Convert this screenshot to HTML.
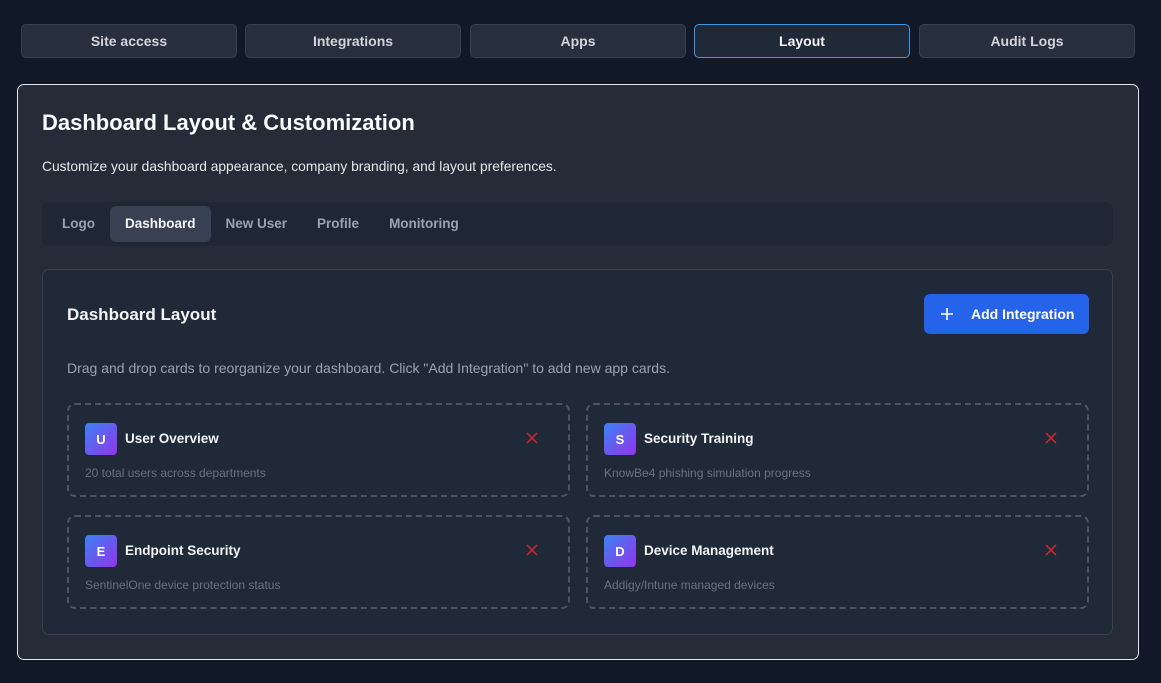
<!DOCTYPE html>
<html><head><meta charset="utf-8"><style>
*{box-sizing:border-box;margin:0;padding:0}
body{width:1161px;height:683px;background:#111827;font-family:"Liberation Sans",sans-serif;position:relative;overflow:hidden;color:#f3f4f6}
.t{position:absolute;top:24px;height:34px;width:216px;background:#282f3c;border:1px solid #374151;border-radius:5px;color:#d1d5db;font-size:14px;font-weight:bold;display:flex;align-items:center;justify-content:center}
.t.a{background:#1f2937;border-color:#3b9ae8;color:#f3f4f6}
.panel{position:absolute;left:17px;top:84px;width:1122px;height:576px;background:#252b37;border:1px solid #e5e7eb;border-radius:7px}
.abs{position:absolute}
.sub{display:flex;position:absolute;left:24px;top:117px;width:1071px;height:44px;background:#1f2735;border-radius:7px;align-items:center;padding-left:5px}
.sub div{font-size:13.5px;font-weight:bold;color:#9ca3af;padding:0 15px;height:36px;line-height:36px;border-radius:6px}
.sub div.a{background:#374151;color:#f3f4f6}
.inner{position:absolute;left:24px;top:184px;width:1071px;height:366px;background:#1f2937;border:1px solid #374151;border-radius:7px}
.btn{position:absolute;left:881px;top:24px;width:165px;height:40px;background:#2563eb;border-radius:6px;color:#fff;font-size:14px;font-weight:bold;display:flex;align-items:center}
.card{position:absolute;width:503px;height:94px;border:2px dashed #4b5563;border-radius:8px}
.ic{position:absolute;left:16px;top:18px;width:32px;height:32px;border-radius:4px;background:linear-gradient(135deg,#3b82f6,#9333ea);color:#fff;font-weight:bold;font-size:13px;display:flex;align-items:center;justify-content:center}
.ct{position:absolute;left:56px;top:26px;font-size:13.5px;font-weight:bold;color:#f3f4f6}
.cx{position:absolute;left:457px;top:27px;width:12px;height:12px}
.cs{position:absolute;left:16px;top:61px;font-size:12px;color:#6b7280}
</style></head><body>
<div class="t" style="left:21px">Site access</div>
<div class="t" style="left:245px">Integrations</div>
<div class="t" style="left:470px">Apps</div>
<div class="t a" style="left:694px">Layout</div>
<div class="t" style="left:919px">Audit Logs</div>
<div class="panel">
<div class="abs" style="left:24px;top:25px;font-size:22px;font-weight:bold;color:#f9fafb">Dashboard Layout &amp; Customization</div>
<div class="abs" style="left:24px;top:74px;font-size:13.8px;color:#e5e7eb">Customize your dashboard appearance, company branding, and layout preferences.</div>
<div class="sub"><div>Logo</div><div class="a">Dashboard</div><div>New User</div><div>Profile</div><div>Monitoring</div></div>
<div class="inner">
<div class="abs" style="left:24px;top:35px;font-size:17px;font-weight:bold;color:#f3f4f6">Dashboard Layout</div>
<div class="btn"><svg style="margin-left:17px" width="12" height="12" viewBox="0 0 12 12"><path d="M6 0V12M0 6H12" stroke="#fff" stroke-width="1.6"/></svg><span style="margin-left:18px">Add Integration</span></div>
<div class="abs" style="left:24px;top:90px;font-size:14px;color:#9ca3af">Drag and drop cards to reorganize your dashboard. Click "Add Integration" to add new app cards.</div>
<div class="card" style="left:24px;top:133px"><div class="ic">U</div><div class="ct">User Overview</div><svg class="cx" viewBox="0 0 12 12"><path d="M1 1L11 11M11 1L1 11" stroke="#dc2626" stroke-width="1.5"/></svg><div class="cs">20 total users across departments</div></div>
<div class="card" style="left:543px;top:133px"><div class="ic">S</div><div class="ct">Security Training</div><svg class="cx" viewBox="0 0 12 12"><path d="M1 1L11 11M11 1L1 11" stroke="#dc2626" stroke-width="1.5"/></svg><div class="cs">KnowBe4 phishing simulation progress</div></div>
<div class="card" style="left:24px;top:245px"><div class="ic">E</div><div class="ct">Endpoint Security</div><svg class="cx" viewBox="0 0 12 12"><path d="M1 1L11 11M11 1L1 11" stroke="#dc2626" stroke-width="1.5"/></svg><div class="cs">SentinelOne device protection status</div></div>
<div class="card" style="left:543px;top:245px"><div class="ic">D</div><div class="ct">Device Management</div><svg class="cx" viewBox="0 0 12 12"><path d="M1 1L11 11M11 1L1 11" stroke="#dc2626" stroke-width="1.5"/></svg><div class="cs">Addigy/Intune managed devices</div></div>
</div>
</div>
</body></html>
